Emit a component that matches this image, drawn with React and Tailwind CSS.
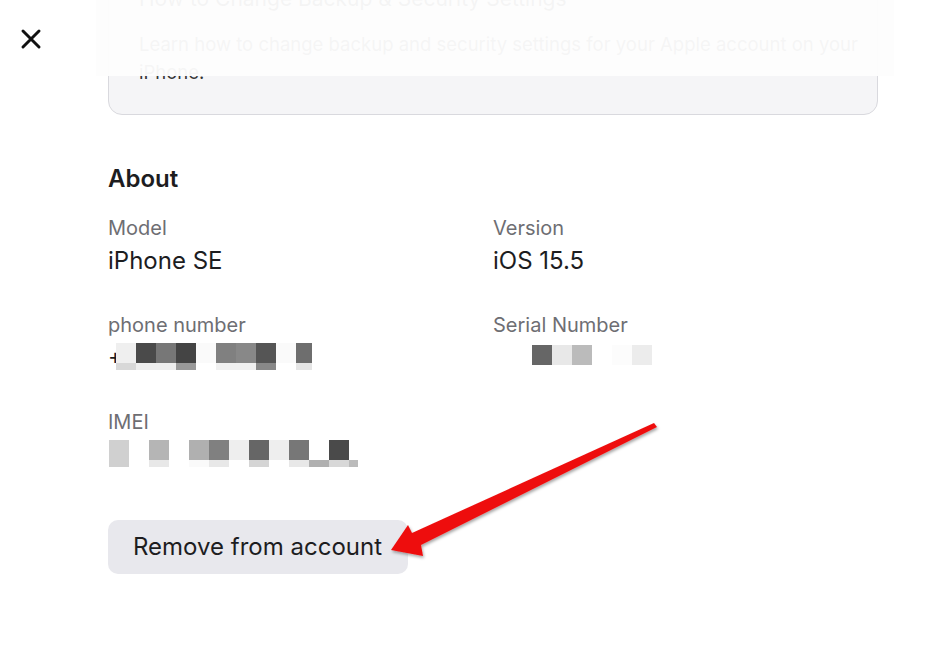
import React from "react";

const phoneRow1 = ["#efefef", "#4a4a4a", "#777777", "#444444", "#fafafa", "#808080", "#888888", "#555555", "#fafafa", "#6e6e6e"];
const phoneRow2 = ["#d8d8d8", "#eeeeee", "#eeeeee", "#999999", "#ffffff", "#f0f0f0", "#f0f0f0", "#888888", "#ffffff", "#e5e5e5"];
const imeiRow1 = ["#d0d0d0", "#ffffff", "#b5b5b5", "#ffffff", "#b0b0b0", "#808080", "#eeeeee", "#666666", "#eeeeee", "#777777", "#ffffff", "#4a4a4a", "#ffffff"];
const imeiRow2 = ["#d0d0d0", "#ffffff", "#e8e8e8", "#ffffff", "#fafafa", "#e8e8e8", "#ffffff", "#d5d5d5", "#ffffff", "#e8e8e8", "#b0b0b0", "#d8d8d8", "#bbbbbb"];
const serialRow = ["#666666", "#e8e8e8", "#bbbbbb", "#ffffff", "#fcfcfc", "#ececec"];

function Pixels({ row1, row2, lastWidth }) {
  return (
    <div className="flex flex-col">
      <div className="flex">
        {row1.map((c, i) => (
          <div key={i} className="h-[20px]" style={{ background: c, width: i === row1.length - 1 && lastWidth ? lastWidth : 20 }} />
        ))}
      </div>
      {row2 && (
        <div className="flex">
          {row2.map((c, i) => (
            <div key={i} className="h-[7px]" style={{ background: c, width: i === row2.length - 1 && lastWidth ? lastWidth : 20 }} />
          ))}
        </div>
      )}
    </div>
  );
}

export default function App() {
  return (
    <div
      className="relative w-[948px] h-[651px] overflow-hidden bg-white text-[#1d1d1f]"
      style={{ fontFamily: "Inter, 'Noto Sans', sans-serif" }}
    >
      {/* close button */}
      <div className="absolute left-[20px] top-[28px]">
        <svg width="22" height="22" viewBox="0 0 22 22">
          <path d="M3 3 L19 19 M19 3 L3 19" stroke="#111" strokeWidth="3" strokeLinecap="round" />
        </svg>
      </div>

      <div className="pl-[108px] w-[878px]">
        {/* card */}
        <div className="-mt-[42px] rounded-[14px] border border-[#d9d9de] bg-[#f5f5f7] pl-[30px] pr-[20px] pt-[24px] pb-[28px]">
          <div className="text-[21px] leading-[32px] text-[#1d1d1f] whitespace-nowrap">How to Change Backup &amp; Security Settings</div>
          <div className="text-[18.5px] leading-[28px] text-[#333] mt-[15px]">
            <div className="whitespace-nowrap">Learn how to change backup and security settings for your Apple account on your</div>
            <div>iPhone.</div>
          </div>
        </div>

        {/* About */}
        <div className="mt-[49px] text-[24px] leading-[29px] font-semibold">About</div>

        <div className="grid grid-cols-[385px_385px] mt-[23px]">
          <div>
            <div className="text-[20px] leading-[24px] text-[#6e6e73]">Model</div>
            <div className="mt-[6px] text-[24px] leading-[29px]">iPhone SE</div>
          </div>
          <div>
            <div className="text-[20px] leading-[24px] text-[#6e6e73]">Version</div>
            <div className="mt-[6px] text-[24px] leading-[29px]">iOS 15.5</div>
          </div>

          <div className="mt-[38px]">
            <div className="text-[20px] leading-[24px] text-[#6e6e73]">phone number</div>
            <div className="mt-[6px] flex items-start">
              <span className="text-[22px] leading-[26px] w-[8px] overflow-hidden">+</span>
              <Pixels row1={phoneRow1} row2={phoneRow2} lastWidth={16} />
            </div>
          </div>
          <div className="mt-[38px]">
            <div className="text-[20px] leading-[24px] text-[#6e6e73]">Serial Number</div>
            <div className="mt-[8px] pl-[39px]">
              <Pixels row1={serialRow} />
            </div>
          </div>

          <div className="mt-[40px]">
            <div className="text-[20px] leading-[24px] text-[#6e6e73]">IMEI</div>
            <div className="mt-[6px] pl-[1px]">
              <Pixels row1={imeiRow1} row2={imeiRow2} lastWidth={9} />
            </div>
          </div>
        </div>

        <button className="mt-[53px] h-[54px] w-[300px] rounded-[10px] bg-[#e8e8ed] text-left pl-[25px] text-[24px] text-[#1d1d1f]">
          Remove from account
        </button>
      </div>

      {/* fade overlay */}
      <div className="absolute left-[96px] top-0 w-[798px] h-[76px] bg-[#fdfdfd]/[0.96]" />

      {/* red arrow */}
      <svg className="absolute left-0 top-0 pointer-events-none" width="948" height="651">
        <defs>
          <filter id="sh" x="-10%" y="-10%" width="120%" height="130%">
            <feDropShadow dx="1" dy="2" stdDeviation="1.5" floodColor="#000" floodOpacity="0.35" />
          </filter>
        </defs>
        <polygon
          points="654,423 657,427 421,545 423,556 391,550 408,525 412,533"
          fill="#ee1111"
          filter="url(#sh)"
        />
      </svg>
    </div>
  );
}
